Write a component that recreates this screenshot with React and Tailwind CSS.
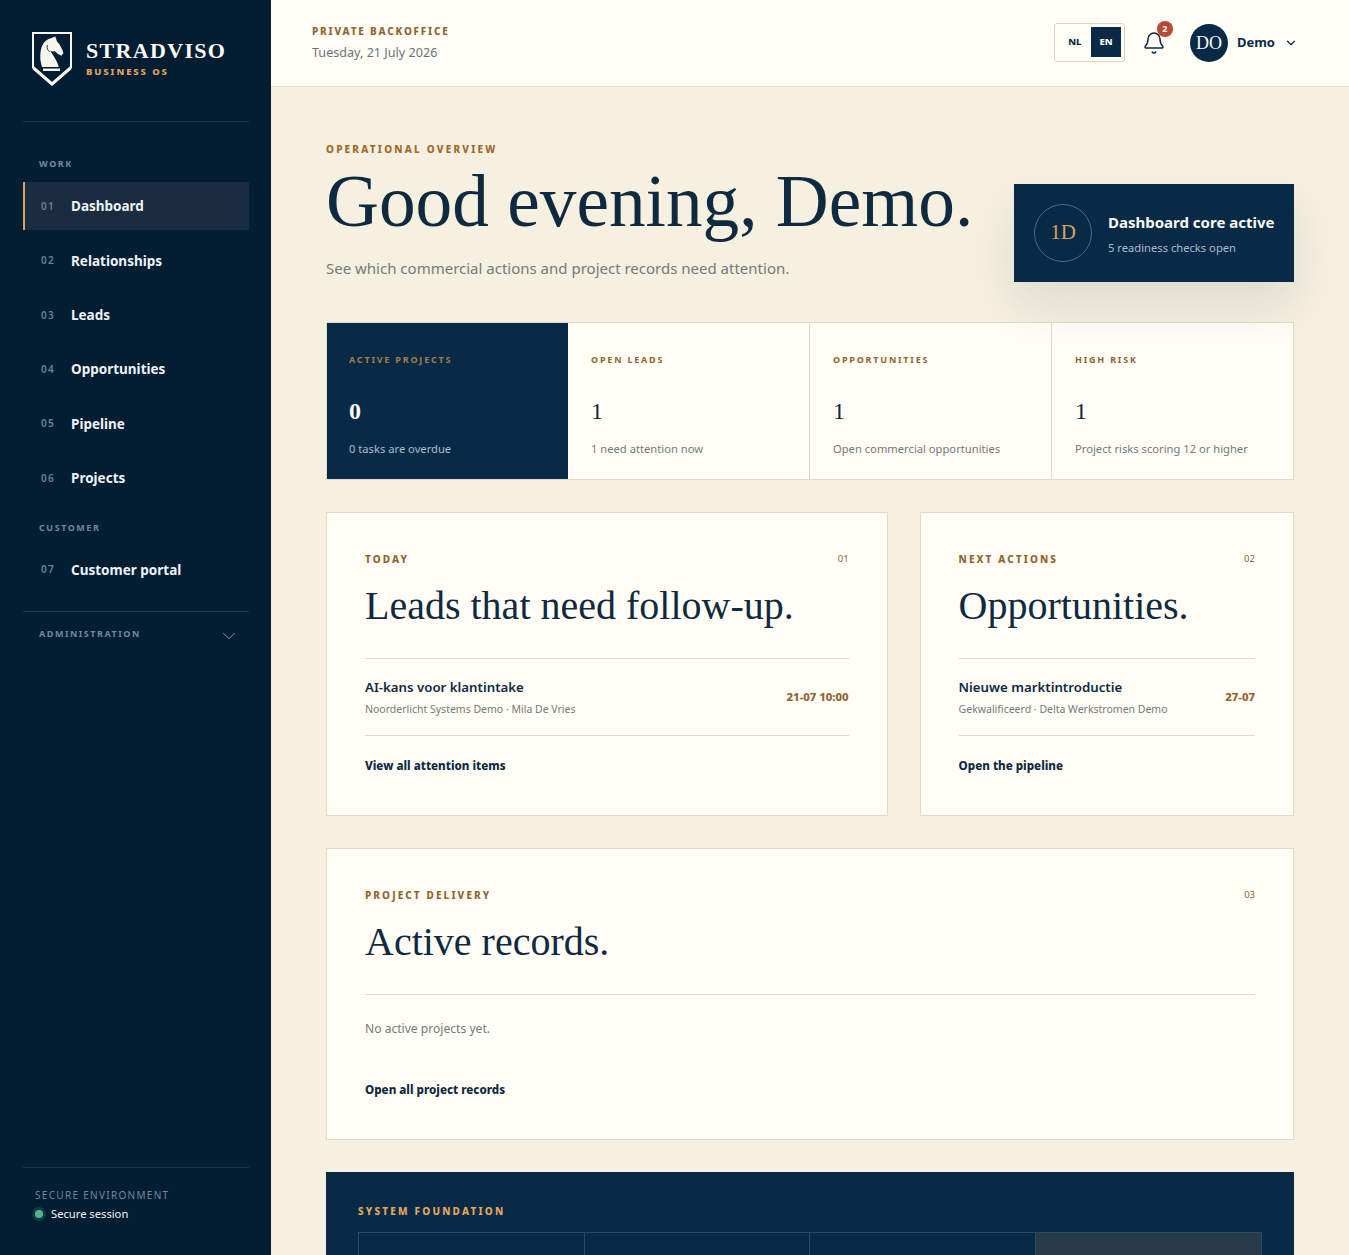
import { Bell, ChevronDown } from 'lucide-react';

const SANS = "font-['Noto_Sans',sans-serif]";
const SERIF = "font-['Liberation_Serif',serif]";

const WORK_NAV = [
    { num: '01', label: 'Dashboard', active: true },
    { num: '02', label: 'Relationships' },
    { num: '03', label: 'Leads' },
    { num: '04', label: 'Opportunities' },
    { num: '05', label: 'Pipeline' },
    { num: '06', label: 'Projects' },
];

const STATS = [
    { label: 'Active projects', value: '0', note: '0 tasks are overdue', dark: true },
    { label: 'Open leads', value: '1', note: '1 need attention now' },
    { label: 'Opportunities', value: '1', note: 'Open commercial opportunities' },
    { label: 'High risk', value: '1', note: 'Project risks scoring 12 or higher', last: true },
];

function Logo() {
    return (
        <svg viewBox="0 0 40 54" className="h-[54px] w-[40px] shrink-0">
            <path d="M1 1h38v34.500L20 52.500 1 35.500z" fill="none" stroke="#f7f5ee" strokeWidth="2" />
            <path d="M1.500 36L20 52 38.500 36" fill="none" stroke="#f7f5ee" strokeWidth="3" />
            <path d="M23.300 4.500L25 9.500C28 12 30 17 31.500 21L29.300 23.700L26 22L22.500 19C21 20 19.500 19.500 18.500 18.500C20 23 25 27 26.700 35H10C9 31 8 28 8.300 24C8.500 15 11 8 19.500 6z" fill="#f7f5ee" />
            <path d="M15.500 13C14.500 16 15.500 18.500 18 20" fill="none" stroke="#031d33" strokeWidth="0.800" />
            <path d="M11 36.500h17v2.500H11z" fill="#f7f5ee" />
        </svg>
    );
}

function NavItem({ num, label, active }) {
    return (
        <div className={`flex h-12 items-center border-l-2 pl-[16px] ${active ? 'border-[#d9a562] bg-[#1a2d40]' : 'border-transparent'}`}>
            <span className="w-[30px] text-[10px] font-semibold tracking-[0.12em] text-[#6d8193]">{num}</span>
            <span className="text-[13.500px] font-bold text-[#eef3f6]">{label}</span>
        </div>
    );
}

function SideLabel({ children }) {
    return <div className="text-[9px] leading-[14px] font-bold tracking-[0.17em] text-[#71899c]">{children}</div>;
}

function Sidebar() {
    return (
        <aside className="flex h-full w-[271px] shrink-0 flex-col bg-[#031d33] pr-[22px] pl-[23px]">
            <div className="flex h-[122px] items-start gap-[14px] border-b border-[#1e3447] pt-[32px] pl-[9px]">
                <Logo />
                <div className="pt-[6px]">
                    <div className={`${SERIF} text-[22px] leading-[26px] font-bold tracking-[0.06em] text-[#fbfaf4]`}>STRADVISO</div>
                    <div className="mt-[1px] text-[9.500px] leading-[14px] font-extrabold tracking-[0.2em] text-[#e2a75f]">BUSINESS OS</div>
                </div>
            </div>
            <div className="pt-[35px]">
                <div className="pl-[16px]"><SideLabel>WORK</SideLabel></div>
                <div className="mt-[11.300px] flex flex-col gap-[6.400px]">
                    {WORK_NAV.map((item) => <NavItem key={item.num} {...item} />)}
                </div>
                <div className="mt-[18.700px] pl-[16px]"><SideLabel>CUSTOMER</SideLabel></div>
                <div className="mt-[11px]"><NavItem num="07" label="Customer portal" /></div>
            </div>
            <div className="mt-[17px] flex items-center justify-between border-t border-[#1e3447] pt-[13px] pr-[9px] pl-[16px]">
                <div className="mb-[4px]"><SideLabel>ADMINISTRATION</SideLabel></div>
                <ChevronDown size={22} strokeWidth={1} className="text-[#8da0af]" />
            </div>
            <div className="mt-auto mb-[32px] border-t border-[#1e3447] pt-[20px] pl-[12px]">
                <div className="text-[10px] leading-[14px] tracking-[0.13em] text-[#71899c]">SECURE ENVIRONMENT</div>
                <div className="mt-[3px] flex items-center gap-[8px]">
                    <span className="h-[8px] w-[8px] rounded-full bg-[#55b58a] shadow-[0_0_0_3px_rgba(85,181,138,0.2)]" />
                    <span className="text-[11.200px] leading-[18px] text-[#f3f5f4]">Secure session</span>
                </div>
            </div>
        </aside>
    );
}

function Topbar() {
    return (
        <header className="flex h-[87px] shrink-0 items-center justify-between border-b border-[#e2dccb] bg-[#fffdf6] pr-[51px] pl-[41px]">
            <div>
                <div className="text-[10px] leading-[14px] font-extrabold tracking-[0.18em] text-[#8f6531]">PRIVATE BACKOFFICE</div>
                <div className="mt-[6px] text-[12.600px] leading-[18px] text-[#6b7378]">Tuesday, 21 July 2026</div>
            </div>
            <div className="flex items-center">
                <div className="mb-[2px] flex h-[39px] w-[71px] items-center rounded-[3px] border border-[#dcd6c6] py-[4px] pr-[3px] pl-[4px]">
                    <span className="flex h-[30px] w-[32px] shrink-0 items-center justify-center text-[9.500px] font-extrabold text-[#082a46]">NL</span>
                    <span className="flex h-[30px] w-[30px] shrink-0 items-center justify-center bg-[#082a46] text-[9.500px] font-extrabold text-[#fbfaf4]">EN</span>
                </div>
                <div className="relative ml-[17px] flex h-[24px] w-[24px] items-center justify-center">
                    <Bell size={24} strokeWidth={1.500} className="text-[#082a46]" />
                    <span className="absolute -top-[10px] left-[15px] flex h-[16px] w-[16px] items-center justify-center rounded-full bg-[#b84a35] text-[9px] font-bold text-white">2</span>
                </div>
                <div className={`${SERIF} ml-[24px] flex h-[38px] w-[38px] items-center justify-center rounded-full bg-[#082a46] text-[18px] text-[#fbfaf4]`}>DO</div>
                <span className="ml-[9px] text-[13px] font-bold text-[#082a46]">Demo</span>
                <ChevronDown size={14} strokeWidth={2} className="ml-[9px] text-[#082a46]" />
            </div>
        </header>
    );
}

function StatCell({ label, value, note, dark, last }) {
    return (
        <div className={`h-full pt-[30px] pr-[22px] ${dark ? 'bg-[#082a46] pl-[22px]' : last ? 'pl-[23px]' : 'border-r border-[#ded8c8] pl-[23px]'}`}>
            <div className={`text-[9px] leading-[13px] font-bold tracking-[0.2em] uppercase ${dark ? 'text-[#a77c45]' : 'text-[#8f6531]'}`}>{label}</div>
            <div className={`${SERIF} mt-[28px] text-[24px] leading-[34px] ${dark ? 'font-bold text-[#fbfaf4]' : 'text-[#0f2a40]'}`}>{value}</div>
            <div className={`mt-[12px] text-[11.200px] leading-[18px] ${dark ? 'text-[#a9bccb]' : 'text-[#737a7d]'}`}>{note}</div>
        </div>
    );
}

function Panel({ kicker, index, title, children, className }) {
    return (
        <section className={`border border-[#e0dac9] bg-[#fffdf6] px-[38px] pt-[39px] ${className}`}>
            <div className="flex items-center justify-between">
                <span className="text-[10px] leading-[14px] font-extrabold tracking-[0.21em] text-[#8f6531] uppercase">{kicker}</span>
                <span className="text-[9.500px] leading-[14px] text-[#8f6531]">{index}</span>
            </div>
            <h2 className={`${SERIF} mt-[17px] border-b border-[#e0dac9] pb-[29px] text-[40px] leading-[46px] text-[#0f2a40]`}>{title}</h2>
            {children}
        </section>
    );
}

function ActionRow({ title, meta, when }) {
    return (
        <div className="flex h-[77px] items-center justify-between border-b border-[#e0dac9]">
            <div>
                <div className="text-[13.250px] leading-[20px] font-semibold text-[#0f2a40]">{title}</div>
                <div className="mt-[3px] pt-[1px] text-[10.500px] leading-[16px] text-[#737a7d]">{meta}</div>
            </div>
            <span className="text-[11.300px] font-extrabold text-[#8f6531]">{when}</span>
        </div>
    );
}

function PanelLink({ children }) {
    return <div className="mt-[21px] text-[11.600px] leading-[18px] font-extrabold text-[#0f2a40]">{children}</div>;
}

export default function App() {
    return (
        <div className={`${SANS} flex h-[1255px] overflow-hidden bg-[#f5f0df]`}>
            <Sidebar />
            <main className="flex min-w-0 flex-1 flex-col">
                <Topbar />
                <div className="px-[55px] pt-[55px]">
                    <div className="flex justify-between">
                        <div>
                            <div className="text-[10px] leading-[14px] font-extrabold tracking-[0.22em] text-[#a0682a]">OPERATIONAL OVERVIEW</div>
                            <h1 className={`${SERIF} mt-[6px] text-[73.300px] leading-[80px] text-[#0f2a40]`}>Good evening, Demo.</h1>
                            <p className="mt-[15px] text-[15px] leading-[22px] text-[#737a7d]">See which commercial actions and project records need attention.</p>
                        </div>
                        <div className="mt-[42px] flex h-[98px] w-[280px] shrink-0 items-center gap-[16px] bg-[#082a46] pl-[20px] shadow-[0_24px_48px_rgba(15,42,64,0.1)]">
                            <div className={`${SERIF} flex h-[58px] w-[58px] items-center justify-center rounded-full border border-[#4f6a80] text-[21px] text-[#dba35e]`}>1D</div>
                            <div className="pt-[2px]">
                                <div className="text-[15px] leading-[22px] font-bold text-[#fbfaf4]">Dashboard core active</div>
                                <div className="mt-[6px] text-[11.200px] leading-[18px] text-[#a9bccb]">5 readiness checks open</div>
                            </div>
                        </div>
                    </div>

                    <div className="mt-[40px] grid h-[158px] grid-cols-[241px_242px_242px_1fr] border border-[#e0dac9] bg-[#fffdf6]">
                        {STATS.map((stat) => <StatCell key={stat.label} {...stat} />)}
                    </div>

                    <div className="mt-[32px] grid h-[304px] grid-cols-[1.500fr_1fr] gap-[32px]">
                        <Panel kicker="Today" index="01" title="Leads that need follow-up.">
                            <ActionRow title="AI-kans voor klantintake" meta="Noorderlicht Systems Demo · Mila De Vries" when="21-07 10:00" />
                            <PanelLink>View all attention items</PanelLink>
                        </Panel>
                        <Panel kicker="Next actions" index="02" title="Opportunities.">
                            <ActionRow title="Nieuwe marktintroductie" meta="Gekwalificeerd · Delta Werkstromen Demo" when="27-07" />
                            <PanelLink>Open the pipeline</PanelLink>
                        </Panel>
                    </div>

                    <Panel kicker="Project delivery" index="03" title="Active records." className="mt-[32px] h-[292px]">
                        <p className="mt-[24px] text-[12.100px] leading-[20px] text-[#737a7d]">No active projects yet.</p>
                        <div className="mt-[42px] text-[11.600px] leading-[18px] font-extrabold text-[#0f2a40]">Open all project records</div>
                    </Panel>

                    <section className="mt-[32px] bg-[#082a46] px-[32px] pt-[32px]">
                        <div className="text-[10px] leading-[14px] font-extrabold tracking-[0.22em] text-[#e2a75f]">SYSTEM FOUNDATION</div>
                        <div className="mt-[14px] grid h-[80px] grid-cols-4 border border-[#2c4a62]">
                            <div className="border-r border-[#2c4a62]" />
                            <div className="border-r border-[#2c4a62]" />
                            <div className="border-r border-[#2c4a62]" />
                            <div className="bg-[#283b4a]" />
                        </div>
                    </section>
                </div>
            </main>
        </div>
    );
}
